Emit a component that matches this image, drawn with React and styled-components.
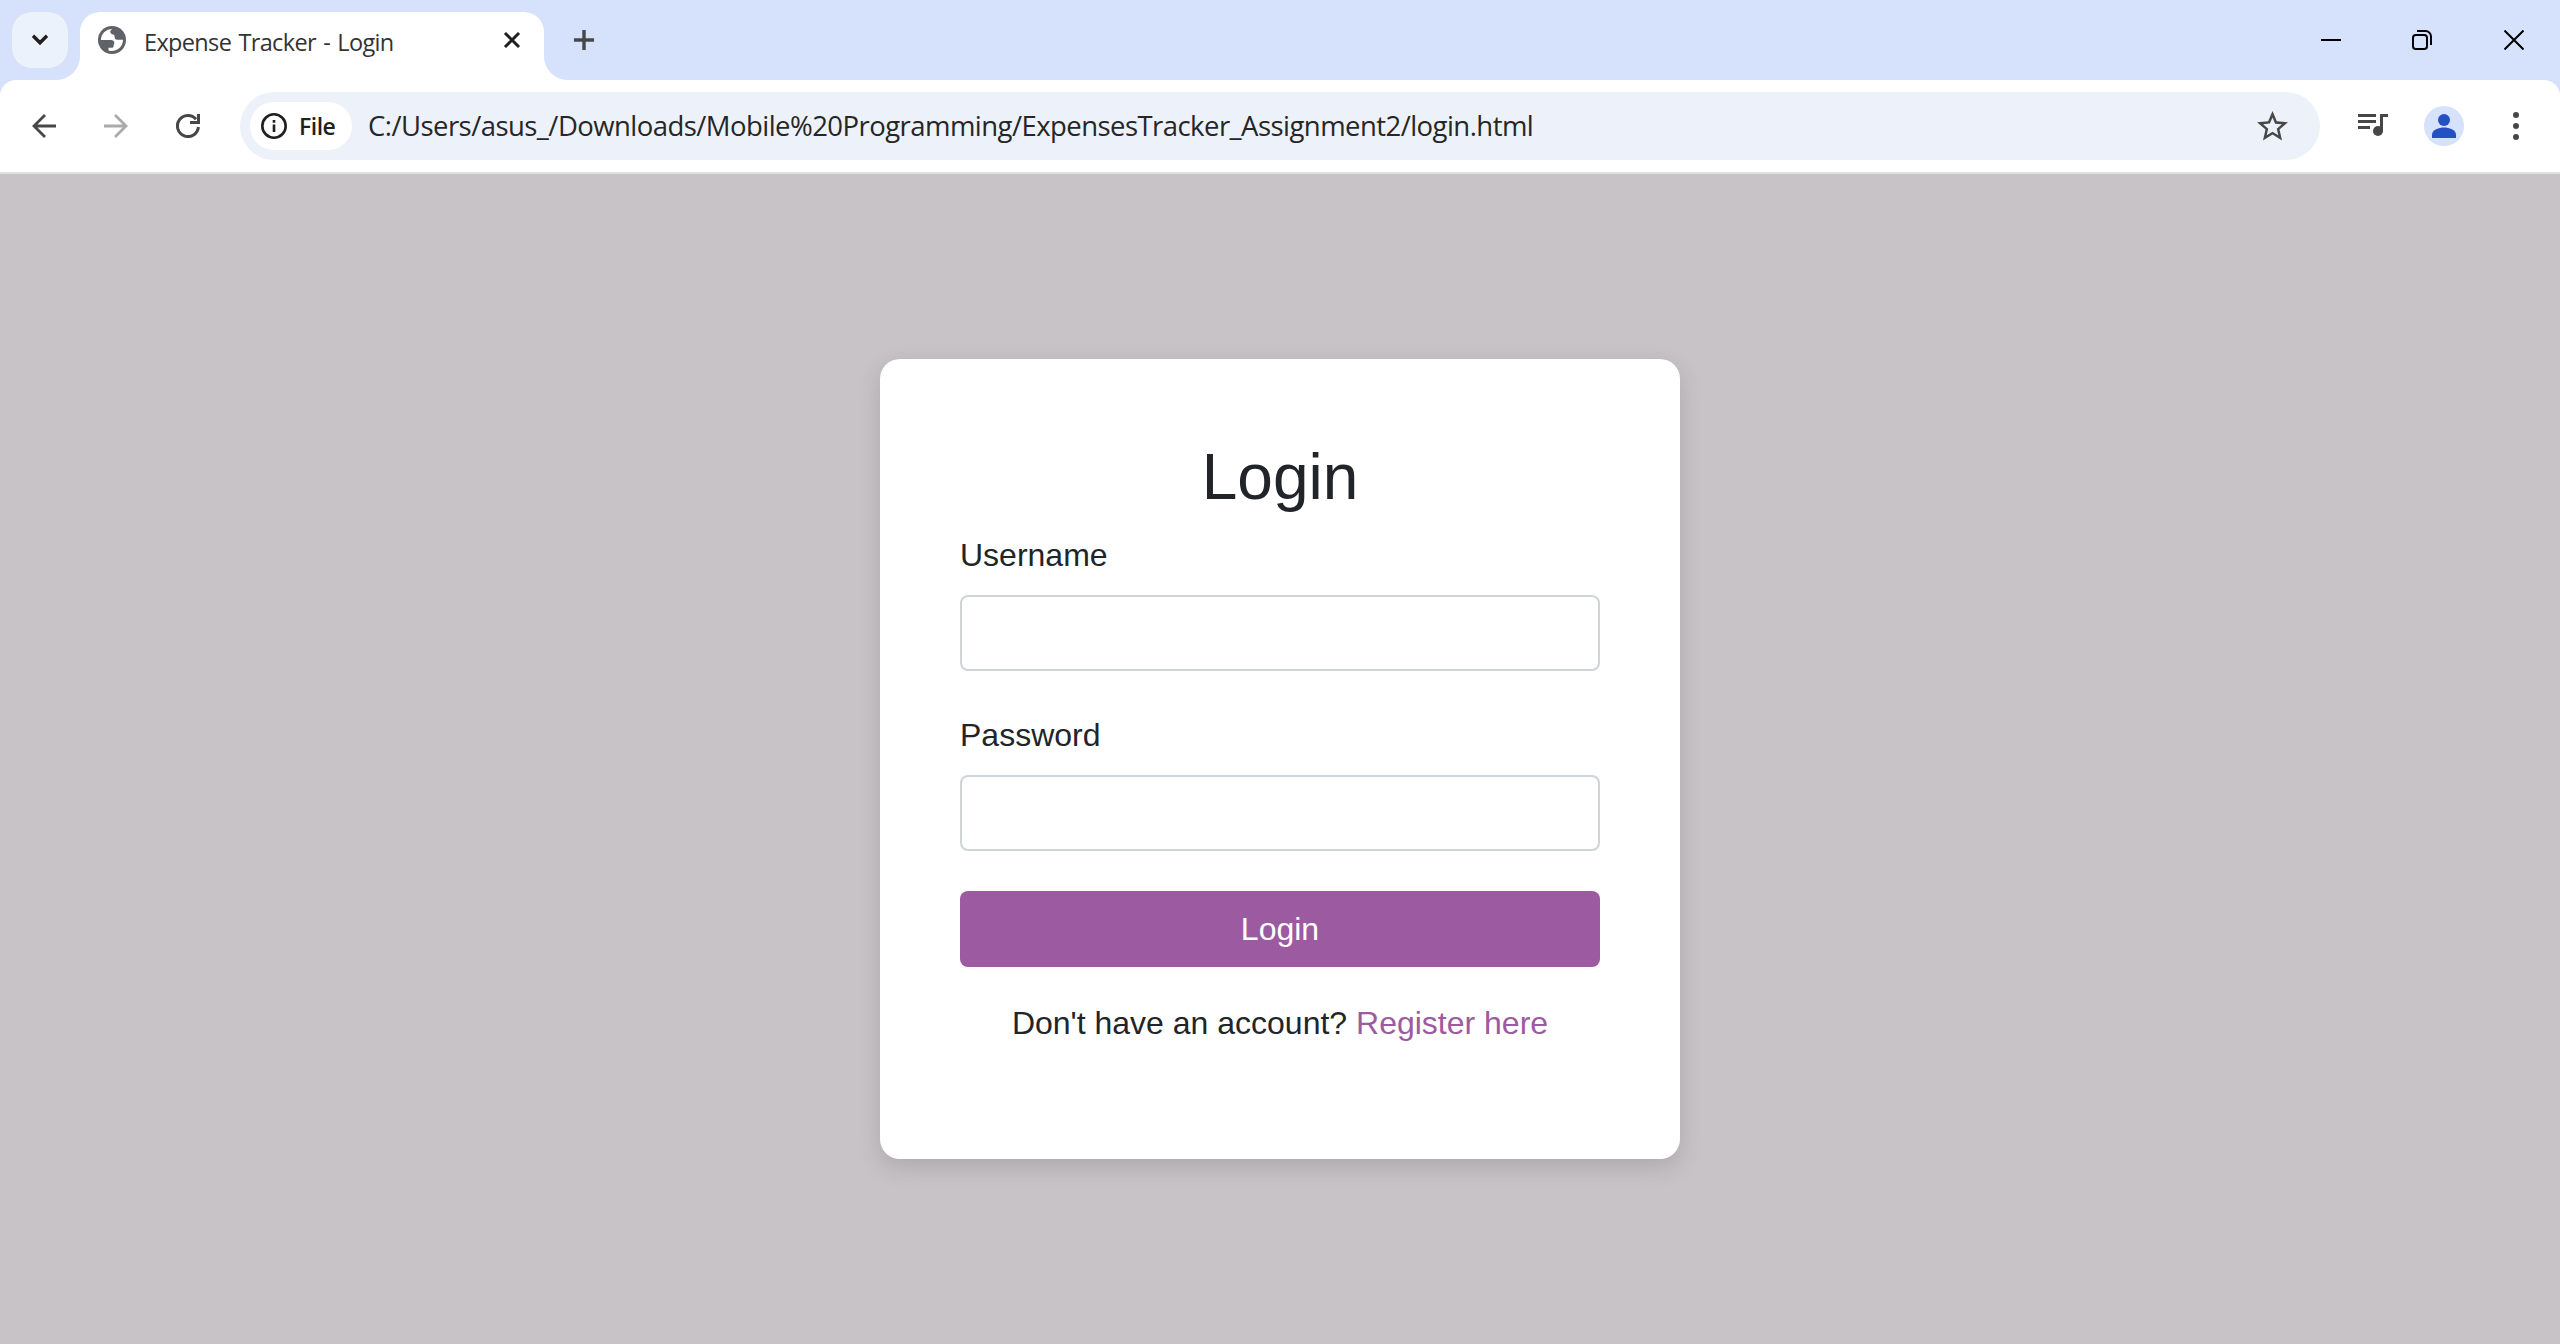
import React from "react";
import styled, { createGlobalStyle } from "styled-components";

const chromeFont = '"Open Sans", "Noto Sans", sans-serif';

const GlobalStyle = createGlobalStyle`
  *, *::before, *::after { box-sizing: border-box; }
  body { margin: 0; overflow: hidden; font-family: "Liberation Sans", Arial, sans-serif; }
`;

const Window = styled.div`
  display: flex;
  flex-direction: column;
  width: 2560px;
  height: 1344px;
  background: #d6e1fc;
`;

const TabStrip = styled.header`
  display: flex;
  height: 80px;
  padding-top: 12px;
  padding-left: 12px;
`;

const TabSearch = styled.button`
  display: grid;
  place-items: center;
  width: 56px;
  height: 56px;
  padding: 0;
  margin-right: 12px;
  border: 0;
  border-radius: 20px;
  background: #ebf2fc;
`;

const Tab = styled.div`
  position: relative;
  display: flex;
  align-items: center;
  width: 464px;
  height: 68px;
  padding: 0 22px 12px 18px;
  border-radius: 20px 20px 0 0;
  background: #fff;

  &::before, &::after {
    content: "";
    position: absolute;
    bottom: 0;
    width: 24px;
    height: 24px;
  }
  &::before {
    left: -24px;
    background: radial-gradient(circle at 0 0, transparent 23.5px, #fff 24.5px);
  }
  &::after {
    right: -24px;
    background: radial-gradient(circle at 100% 0, transparent 23.5px, #fff 24.5px);
  }
`;

const TabTitle = styled.span`
  flex: 1;
  margin-left: 18px;
  padding-top: 3px;
  font: 400 23.5px/32px ${chromeFont};
  letter-spacing: -0.65px;
  word-spacing: 1.8px;
  color: #333;
  white-space: nowrap;
`;

const Glyph = styled.svg`
  display: block;
  flex: none;
  width: ${(p) => p.$w}px;
  height: ${(p) => p.$h ?? p.$w}px;
`;

const NewTab = styled.button`
  display: grid;
  place-items: center;
  width: 56px;
  height: 56px;
  margin-left: 12px;
  padding: 0;
  border: 0;
  background: none;
`;

const WindowControls = styled.div`
  display: flex;
  margin-left: auto;
  height: 56px;
`;

const WindowButton = styled.button`
  display: grid;
  place-items: center;
  width: ${(p) => p.$width ?? 92}px;
  height: 56px;
  padding: 0;
  border: 0;
  background: none;
`;

const Toolbar = styled.nav`
  display: flex;
  align-items: center;
  height: 94px;
  padding: 0 8px;
  border-bottom: 2px solid #dfe1e0;
  border-radius: 16px 16px 0 0;
  background: #fff;
`;

const ToolButton = styled.button`
  display: grid;
  flex: none;
  place-items: center;
  width: 72px;
  height: 68px;
  padding: 0;
  border: 0;
  background: none;
`;

const AddressBar = styled.div`
  display: flex;
  flex: 1;
  align-items: center;
  height: 68px;
  margin: 0 16px;
  padding: 0 29.5px 0 10px;
  border-radius: 34px;
  background: #edf2fa;
`;

const SchemeChip = styled.div`
  display: flex;
  align-items: center;
  gap: 11px;
  width: 102px;
  height: 48px;
  padding-left: 10px;
  border-radius: 24px;
  background: #fff;
  font: 600 23px/32px ${chromeFont};
  letter-spacing: -0.5px;
  color: #1f1f1f;
`;

const Url = styled.span`
  flex: 1;
  margin-left: 16px;
  font: 400 27.5px/40px ${chromeFont};
  letter-spacing: -0.55px;
  color: #262626;
  white-space: nowrap;
`;

const Avatar = styled.span`
  display: grid;
  place-items: center;
  width: 40px;
  height: 40px;
  border-radius: 50%;
  background: #d6e1fc;
`;

const Page = styled.main`
  flex: 1;
  display: flex;
  align-items: center;
  justify-content: center;
  background: #c8c3c7;
`;

const Card = styled.section`
  width: 800px;
  height: 800px;
  padding: 80px;
  border-radius: 20px;
  background: #fff;
  box-shadow: 0 8px 24px rgba(0, 0, 0, 0.14);
`;

const Heading = styled.h2`
  margin: 0 0 16px;
  font-size: 64px;
  font-weight: 400;
  line-height: 76px;
  text-align: center;
  color: #212529;
`;

const Field = styled.div`
  margin-bottom: 40px;
`;

const Label = styled.label`
  display: block;
  margin-bottom: 16px;
  font-size: 32px;
  line-height: 48px;
  color: #212529;
`;

const Input = styled.input`
  display: block;
  width: 100%;
  height: 76px;
  padding: 12px 24px;
  border: 2px solid #ced4da;
  border-radius: 8px;
  outline: none;
  font: 32px/48px "Liberation Sans", Arial, sans-serif;
`;

const Submit = styled.button`
  display: block;
  width: 100%;
  height: 76px;
  padding: 0;
  border: 0;
  border-radius: 8px;
  background: #9c5aa1;
  font: 32px/48px "Liberation Sans", Arial, sans-serif;
  color: #fff;
`;

const Prompt = styled.p`
  margin: 32px 0 0;
  font-size: 32px;
  line-height: 48px;
  text-align: center;
  color: #212529;
`;

const RegisterLink = styled.a`
  color: #9c5aa1;
  text-decoration: none;
`;

const ink = "#474747";

export default function App() {
  return (
    <Window>
      <GlobalStyle />
      <TabStrip>
        <TabSearch aria-label="Search tabs">
          <Glyph $w={24} viewBox="0 0 24 24" fill="none" stroke="#1f1f1f" strokeWidth="3.4">
            <path d="M5 7.800 12 14.800l7-7" />
          </Glyph>
        </TabSearch>
        <Tab>
          <Glyph $w={28} viewBox="0 0 28 28">
            <circle cx="14" cy="14" r="14" fill="#5f6368" />
            <path
              fill="#fff"
              d="M14.300 3C12.900 3.900 12.300 4.700 12.300 5.800C12.300 7.400 13.500 8.200 15 8.500C16.300 8.800 16.600 9.600 16.600 11C16.600 12.700 17.500 13.500 19.200 13.700H25A11 11 0 0 1 10.500 24.400V21.700H13.800C15 21.700 15.600 21 15.600 19.900C15.600 18.700 16.300 18.100 16.300 17.100C16.300 15.300 15 14 13.200 14H3A11 11 0 0 1 14.300 3Z"
            />
          </Glyph>
          <TabTitle>Expense Tracker - Login</TabTitle>
          <Glyph $w={20} viewBox="0 0 20 20" fill="none" stroke="#1f1f1f" strokeWidth="3">
            <path d="m3 3 14 14M17 3 3 17" />
          </Glyph>
        </Tab>
        <NewTab aria-label="New tab">
          <Glyph $w={20} viewBox="0 0 20 20" fill="none" stroke={ink} strokeWidth="3.4">
            <path d="M10 0v20M0 10h20" />
          </Glyph>
        </NewTab>
        <WindowControls>
          <WindowButton aria-label="Minimize" $width={90}>
            <Glyph $w={20} viewBox="0 0 20 20" stroke="#000" strokeWidth="2">
              <path d="M0 10h20" />
            </Glyph>
          </WindowButton>
          <WindowButton aria-label="Restore">
            <Glyph $w={20} viewBox="0 0 20 20" fill="none" stroke="#000" strokeWidth="2">
              <rect x="1" y="5" width="14" height="14" rx="2.800" />
              <path d="M5 1h8.500A5.500 5.500 0 0 1 19 6.500V15" />
            </Glyph>
          </WindowButton>
          <WindowButton aria-label="Close">
            <Glyph $w={20} viewBox="0 0 20 20" fill="none" stroke="#000" strokeWidth="2">
              <path d="m.5.5 19 19M19.500.5l-19 19" />
            </Glyph>
          </WindowButton>
        </WindowControls>
      </TabStrip>
      <Toolbar>
        <ToolButton aria-label="Back">
          <Glyph $w={24} viewBox="0 0 24 24" fill="none" stroke={ink} strokeWidth="2.800">
            <path d="M24 12H2M13 1 2 12l11 11" />
          </Glyph>
        </ToolButton>
        <ToolButton aria-label="Forward">
          <Glyph $w={24} viewBox="0 0 24 24" fill="none" stroke="#aaa" strokeWidth="2.800">
            <path d="M0 12h22M11 1l11 11-11 11" />
          </Glyph>
        </ToolButton>
        <ToolButton aria-label="Reload">
          <Glyph $w={24} viewBox="0 0 24 24" fill="none" stroke={ink} strokeWidth="3">
            <path d="M22.400 13A10.500 10.500 0 1 1 20 5.300" />
            <path d="M22.500 0v8.500H14" />
          </Glyph>
        </ToolButton>
        <AddressBar>
          <SchemeChip>
            <Glyph $w={28} viewBox="0 0 28 28" fill="none" stroke="#1f1f1f" strokeWidth="2.600">
              <circle cx="14" cy="14" r="11.700" />
              <path d="M14 12.500V20M14 8v2.800" />
            </Glyph>
            File
          </SchemeChip>
          <Url>C:/Users/asus_/Downloads/Mobile%20Programming/ExpensesTracker_Assignment2/login.html</Url>
          <Glyph $w={37} viewBox="0 0 24 24" fill={ink}>
            <path d="M22 9.240l-7.190-.62L12 2 9.190 8.630 2 9.240l5.460 4.730L5.820 21 12 17.270 18.180 21l-1.630-7.030L22 9.240zM12 15.400l-3.760 2.270 1-4.280-3.320-2.880 4.380-.38L12 6.100l1.710 4.040 4.380.38-3.320 2.880 1 4.280L12 15.400z" />
          </Glyph>
        </AddressBar>
        <ToolButton aria-label="Media controls">
          <Glyph $w={32} viewBox="0 0 32 32" fill={ink}>
            <path d="M2 4h18v3H2zM2 10h18v3H2zM2 16h12v3H2zM24 4h8v3h-5v14h-3z" />
            <circle cx="22" cy="21" r="5" />
          </Glyph>
        </ToolButton>
        <ToolButton aria-label="Profile">
          <Avatar>
            <Glyph $w={24} viewBox="0 0 24 24" fill="#2450c4">
              <circle cx="12" cy="6" r="6" />
              <path d="M0 24v-3.500C0 16 7 13.500 12 13.500S24 16 24 20.500V24Z" />
            </Glyph>
          </Avatar>
        </ToolButton>
        <ToolButton aria-label="Menu">
          <Glyph $w={6} $h={28} viewBox="0 0 6 28" fill={ink}>
            <circle cx="3" cy="3" r="3" />
            <circle cx="3" cy="14" r="3" />
            <circle cx="3" cy="25" r="3" />
          </Glyph>
        </ToolButton>
      </Toolbar>
      <Page>
        <Card>
          <Heading>Login</Heading>
          <Field>
            <Label htmlFor="username">Username</Label>
            <Input id="username" type="text" />
          </Field>
          <Field>
            <Label htmlFor="password">Password</Label>
            <Input id="password" type="password" />
          </Field>
          <Submit>Login</Submit>
          <Prompt>
            Don't have an account? <RegisterLink>Register here</RegisterLink>
          </Prompt>
        </Card>
      </Page>
    </Window>
  );
}
